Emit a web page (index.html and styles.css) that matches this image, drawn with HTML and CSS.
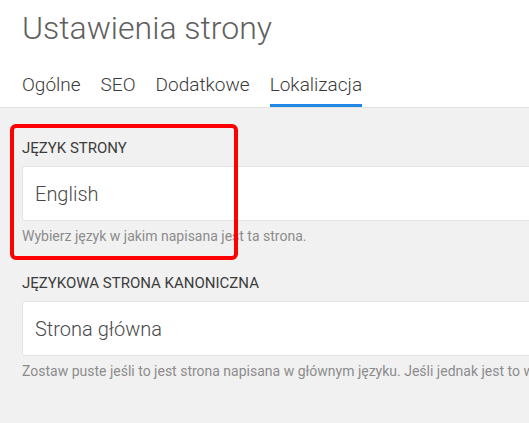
FILE: index.html
```html
<!DOCTYPE html>
<html lang="pl">
<head>
<meta charset="utf-8">
<title>Ustawienia strony</title>
<link rel="stylesheet" href="styles.css">
</head>
<body>
<div class="page">
  <header class="header">
    <h1 class="title">Ustawienia strony</h1>
    <nav class="tabs">
      <span class="tab">Ogólne</span>
      <span class="tab">SEO</span>
      <span class="tab">Dodatkowe</span>
      <span class="tab tab-active">Lokalizacja</span>
    </nav>
  </header>
  <main class="content">
    <div class="field">
      <div class="label">JĘZYK STRONY</div>
      <div class="input">English</div>
      <div class="help">Wybierz język w jakim napisana jest ta strona.</div>
    </div>
    <div class="field">
      <div class="label">JĘZYKOWA STRONA KANONICZNA</div>
      <div class="input">Strona główna</div>
      <div class="help">Zostaw puste jeśli to jest strona napisana w głównym języku. Jeśli jednak jest to wersja językowa innej strony, wybierz tutaj stronę kanoniczną.</div>
    </div>
    <div class="highlight"></div>
  </main>
</div>
</body>
</html>
```

FILE: styles.css
```css
html, body {
  margin: 0;
  padding: 0;
}
body {
  font-family: Roboto, "Noto Sans", Arial, sans-serif;
  background: #f1f1f1;
  overflow: hidden;
  width: 529px;
  height: 423px;
}
.page {
  width: 900px;
  height: 423px;
  overflow: hidden;
}
.header {
  background: #ffffff;
  padding-left: 22px;
}
.title {
  margin: 0;
  padding-top: 10px;
  font-size: 32px;
  line-height: 36px;
  font-weight: 300;
  color: #5f5f5f;
}
.tabs {
  display: flex;
  gap: 20px;
  margin-top: 27px;
}
.tab {
  font-size: 19px;
  line-height: 24px;
  padding-bottom: 7px;
  border-bottom: 3px solid transparent;
  font-weight: 300;
  color: #3a3a3a;
}
.tab-active {
  border-bottom-color: #2188e8;
}
.content {
  position: relative;
  border-top: 1px solid #e2e2e2;
  padding: 30px 0 0 22px;
  display: flex;
  flex-direction: column;
  gap: 28px;
}
.label {
  font-size: 15px;
  line-height: 20px;
  color: #3c3c3c;
  margin-bottom: 8px;
}
.input {
  box-sizing: border-box;
  height: 55px;
  background: #ffffff;
  border: 1px solid #e4e4e4;
  border-radius: 3px;
  padding-left: 12px;
  display: flex;
  align-items: center;
  font-size: 20px;
  font-weight: 300;
  color: #4a4a4a;
}
.help {
  margin-top: 6px;
  font-size: 14px;
  line-height: 18px;
  color: #8c8c8c;
  white-space: nowrap;
}
.highlight {
  position: absolute;
  left: 10px;
  top: 16px;
  width: 228px;
  height: 136px;
  box-sizing: border-box;
  border: 4px solid #ff0000;
  border-radius: 6px;
  pointer-events: none;
}
```
